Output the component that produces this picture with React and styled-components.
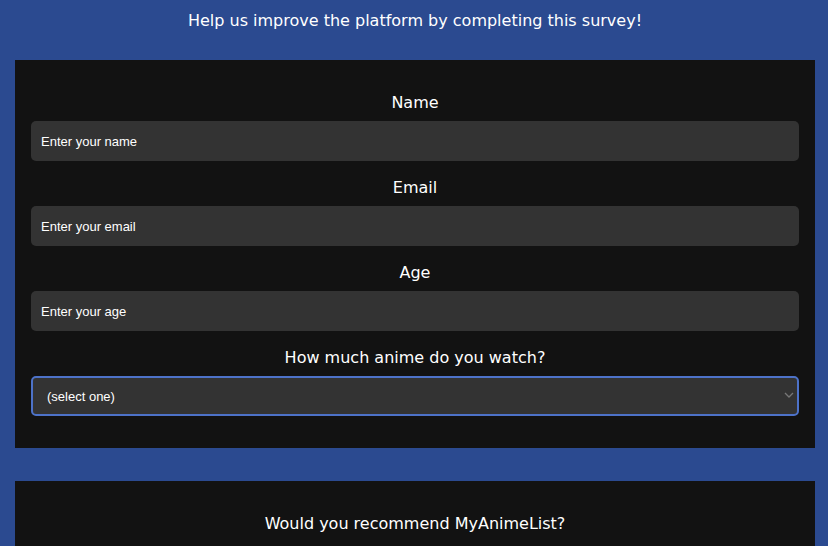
import React from "react";
import styled, { createGlobalStyle } from "styled-components";

const GlobalStyle = createGlobalStyle`
  body {
    margin: 0;
    background: #2b4a90;
    font-family: "DejaVu Sans", Verdana, sans-serif;
  }
`;

const Page = styled.div`
  display: flex;
  flex-direction: column;
  padding: 0 13px 0 15px;
`;

const Title = styled.h1`
  margin: 0;
  padding-top: 11px;
  height: 60px;
  box-sizing: border-box;
  text-align: center;
  font-size: 16px;
  font-weight: normal;
  color: #fff;
`;

const Card = styled.form`
  display: flex;
  flex-direction: column;
  background: #121212;
  padding: ${(p) => p.$pad || "33px 16px 32px"};
  margin-bottom: 33px;
`;

const Field = styled.div`
  display: flex;
  flex-direction: column;
  margin-bottom: ${(p) => (p.$last ? "0" : "17px")};
`;

const Label = styled.label`
  text-align: center;
  color: #fff;
  font-size: 16px;
  line-height: 19px;
  margin-bottom: 9px;
`;

const Input = styled.input`
  height: 40px;
  box-sizing: border-box;
  border: none;
  border-radius: 5px;
  background: #333;
  color: #fff;
  padding: 0 10px;
  font-family: "Liberation Sans", Arial, sans-serif;
  font-size: 13px;
  outline: none;
  &::placeholder {
    color: #fff;
    opacity: 1;
  }
`;

const SelectWrap = styled.div`
  position: relative;
  display: flex;
`;

const Select = styled.select`
  flex: 1;
  appearance: none;
  height: 40px;
  box-sizing: border-box;
  border: 2px solid #4d72c8;
  border-radius: 5px;
  background: #333;
  color: #fff;
  padding: 0 14px;
  font-family: "Liberation Sans", Arial, sans-serif;
  font-size: 13px;
  outline: none;
`;

const Chevron = styled.svg`
  position: absolute;
  right: 5px;
  top: 15px;
  pointer-events: none;
`;

const fields = [
  { id: "name", label: "Name", placeholder: "Enter your name", type: "text" },
  { id: "email", label: "Email", placeholder: "Enter your email", type: "email" },
  { id: "age", label: "Age", placeholder: "Enter your age", type: "number" },
];

export default function App() {
  return (
    <>
      <GlobalStyle />
      <Page>
        <Title>Help us improve the platform by completing this survey!</Title>
        <Card>
          {fields.map((f) => (
            <Field key={f.id}>
              <Label htmlFor={f.id}>{f.label}</Label>
              <Input id={f.id} type={f.type} placeholder={f.placeholder} />
            </Field>
          ))}
          <Field $last>
            <Label htmlFor="watch">How much anime do you watch?</Label>
            <SelectWrap>
              <Select id="watch" defaultValue="">
                <option value="">(select one)</option>
                <option>A little</option>
                <option>A lot</option>
              </Select>
              <Chevron width="10" height="8" viewBox="0 0 10 8">
                <path d="M1 2 L5 6 L9 2" fill="none" stroke="#777" strokeWidth="1.3" />
              </Chevron>
            </SelectWrap>
          </Field>
        </Card>
        <Card $pad="33px 16px 40px">
          <Label>Would you recommend MyAnimeList?</Label>
        </Card>
      </Page>
    </>
  );
}
